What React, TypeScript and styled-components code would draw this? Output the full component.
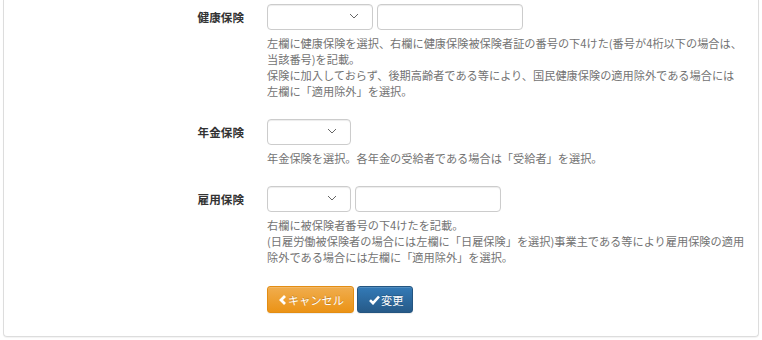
import styled, { createGlobalStyle } from "styled-components";

const GlobalStyle = createGlobalStyle`
  html, body {
    margin: 0;
    padding: 0;
    background: #fff;
  }
  body {
    font-family: "Noto Sans CJK JP", "Noto Sans", sans-serif;
    font-size: 11.2px;
    color: #333;
  }
`;

function Chevron() {
  return (
    <svg width="10" height="6" viewBox="0 0 10 6">
      <path d="M1 1l4 4 4-4" fill="none" stroke="#666" strokeWidth="1" />
    </svg>
  );
}

function SelectBox({ width }: { width: number }) {
  return (
    <SelectWrap style={{ width }}>
      <Select defaultValue="">
        <option value=""></option>
      </Select>
      <Arrow>
        <Chevron />
      </Arrow>
    </SelectWrap>
  );
}

export default function App() {
  return (
    <Page>
      <GlobalStyle />
      <Panel>
        <Group>
          <Label>健康保険</Label>
          <Controls>
            <Inline>
              <SelectBox width={106} />
              <TextInput $width={146} />
            </Inline>
            <Help>
              左欄に健康保険を選択、右欄に健康保険被保険者証の番号の下4けた(番号が4桁以下の場合は、
              <br />
              当該番号)を記載。
              <br />
              保険に加入しておらず、後期高齢者である等により、国民健康保険の適用除外である場合には
              <br />
              左欄に「適用除外」を選択。
            </Help>
          </Controls>
        </Group>

        <Group>
          <Label>年金保険</Label>
          <Controls>
            <Inline>
              <SelectBox width={84} />
            </Inline>
            <Help>年金保険を選択。各年金の受給者である場合は「受給者」を選択。</Help>
          </Controls>
        </Group>

        <Group>
          <Label>雇用保険</Label>
          <Controls>
            <Inline>
              <SelectBox width={84} />
              <TextInput $width={146} />
            </Inline>
            <Help>
              右欄に被保険者番号の下4けたを記載。
              <br />
              (日雇労働被保険者の場合には左欄に「日雇保険」を選択)事業主である等により雇用保険の適用
              <br />
              除外である場合には左欄に「適用除外」を選択。
            </Help>
          </Controls>
        </Group>

        <Actions>
          <Button $variant="warning">
            <svg width="8" height="10" viewBox="0 0 8 10">
              <path d="M6 1L2 5l4 4" fill="none" stroke="#fff" strokeWidth="2.8" />
            </svg>
            キャンセル
          </Button>
          <Button $variant="primary">
            <svg width="11" height="10" viewBox="0 0 11 10">
              <path d="M1 5.2l3 3L10 1.5" fill="none" stroke="#fff" strokeWidth="2.6" />
            </svg>
            変更
          </Button>
        </Actions>
      </Panel>
    </Page>
  );
}

const Page = styled.div`
  padding: 0 3px 2px 3px;
`;

const Panel = styled.div`
  border: 1px solid #ddd;
  border-top: none;
  border-radius: 0 0 4px 4px;
  box-shadow: 0 1px 1px rgba(0, 0, 0, 0.05);
  padding: 4px 0 23px 0;
  display: flex;
  flex-direction: column;
  gap: 20px;
`;

const Group = styled.div`
  display: grid;
  grid-template-columns: 240px 1fr;
  column-gap: 23px;
`;

const Label = styled.div`
  text-align: right;
  font-weight: bold;
  font-size: 11.6px;
  line-height: 16px;
  padding-top: 5px;
  color: #333;
`;

const Controls = styled.div`
  display: flex;
  flex-direction: column;
`;

const Inline = styled.div`
  display: flex;
  gap: 4px;
`;

const SelectWrap = styled.div`
  position: relative;
  height: 26px;
`;

const Select = styled.select`
  appearance: none;
  width: 100%;
  height: 26px;
  border: 1px solid #ccc;
  border-radius: 4px;
  background: #fff;
  box-sizing: border-box;
  box-shadow: inset 0 1px 1px rgba(0, 0, 0, 0.075);
  font: inherit;
`;

const Arrow = styled.span`
  position: absolute;
  right: 14px;
  top: 9px;
  display: flex;
  pointer-events: none;
`;

const TextInput = styled.input<{ $width: number }>`
  width: ${(p) => p.$width}px;
  height: 26px;
  box-sizing: border-box;
  border: 1px solid #ccc;
  border-radius: 4px;
  box-shadow: inset 0 1px 1px rgba(0, 0, 0, 0.075);
  font: inherit;
  padding: 0 6px;
`;

const Help = styled.div`
  margin-top: 5px;
  color: #737373;
  font-size: 11.2px;
  line-height: 16px;
  white-space: nowrap;
`;

const Actions = styled.div`
  display: flex;
  gap: 3px;
  padding-left: 263px;
  margin-top: 1px;
`;

const Button = styled.button<{ $variant: "warning" | "primary" }>`
  display: inline-flex;
  align-items: center;
  gap: 1px;
  height: 27px;
  padding: 0 9px 0 11px;
  border-radius: 3px;
  font-family: inherit;
  font-size: 11.2px;
  color: #fff;
  text-shadow: 0 -1px 0 rgba(0, 0, 0, 0.2);
  border: 1px solid
    ${(p) => (p.$variant === "warning" ? "#e38d13" : "#245580")};
  background: ${(p) =>
    p.$variant === "warning"
      ? "linear-gradient(to bottom, #f0ad4e 0%, #eb9316 100%)"
      : "linear-gradient(to bottom, #337ab7 0%, #265a88 100%)"};
  box-shadow: inset 0 1px 0 rgba(255, 255, 255, 0.15), 0 1px 1px rgba(0, 0, 0, 0.075);
`;
